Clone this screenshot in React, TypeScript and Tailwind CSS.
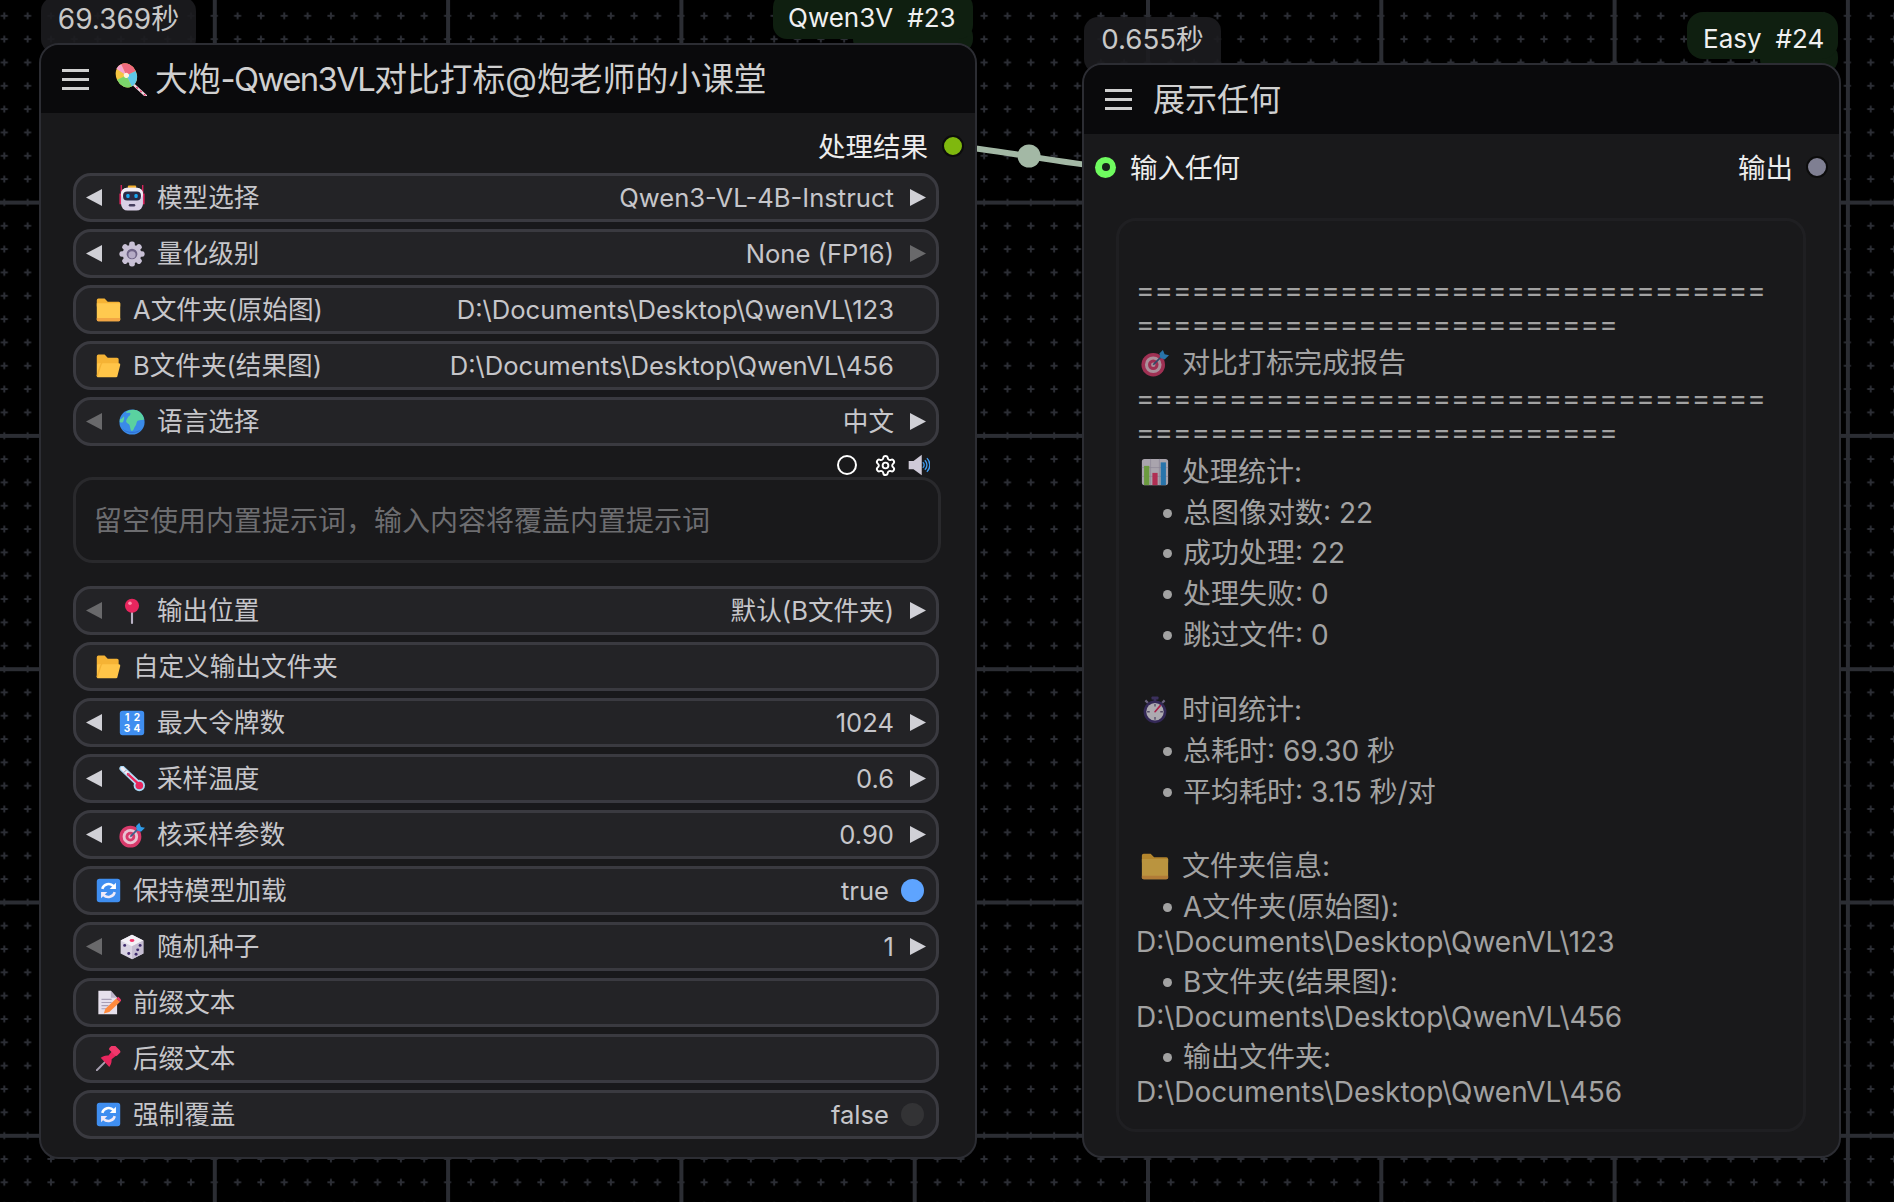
import React from "react";
import { Settings } from "lucide-react";

const FONT = "font-['Inter','Noto_Sans_CJK_SC','Noto_Sans',sans-serif]";

type IconP = { className?: string };
const Svg = ({ className = "w-[26px] h-[26px]", children }: IconP & { children: React.ReactNode }) => (
  <svg viewBox="0 0 32 32" className={`shrink-0 ${className}`}>{children}</svg>
);

const Robot = (p: IconP) => (
  <Svg {...p}>
    <rect x="0.5" y="10" width="2" height="14" rx="1" fill="#e0245e" />
    <rect x="29.5" y="10" width="2" height="14" rx="1" fill="#e0245e" />
    <rect x="2" y="0" width="1.6" height="10" fill="#e0245e" />
    <rect x="28.4" y="0" width="1.6" height="10" fill="#e0245e" />
    <rect x="11" y="0.5" width="10" height="4" rx="1" fill="#f5b02e" />
    <rect x="2.5" y="3.5" width="27" height="28" rx="8" fill="#d9cfe6" />
    <rect x="2.5" y="3.5" width="27" height="14" rx="7" fill="#f1edf5" />
    <rect x="5" y="8" width="22" height="11" rx="5" fill="#2b2a45" />
    <rect x="9" y="11" width="4" height="5" rx="1.5" fill="#19a6f0" />
    <rect x="19" y="11" width="4" height="5" rx="1.5" fill="#19a6f0" />
    <rect x="12" y="23.5" width="8" height="3" rx="1.5" fill="#453d5e" />
  </Svg>
);
const Gear = (p: IconP) => (
  <Svg {...p}>
    <g fill="#c9c1d6">
      {[0, 45, 90, 135, 180, 225, 270, 315].map((a) => (
        <rect key={a} x="12.5" y="0.5" width="7" height="9" rx="3" transform={`rotate(${a} 16 16)`} />
      ))}
      <circle cx="16" cy="16" r="11.5" />
    </g>
    <circle cx="16" cy="16" r="6.6" fill="#6f6487" />
    <circle cx="16" cy="17" r="4.4" fill="#b5abc6" />
  </Svg>
);
const Folder = (p: IconP) => (
  <Svg {...p}>
    <path d="M1 4a2 2 0 0 1 2-2h8l4 4h14a2 2 0 0 1 2 2v4H1z" fill="#f5b335" />
    <path d="M1 8h30v21a2 2 0 0 1-2 2H3a2 2 0 0 1-2-2z" fill="#ffc94f" />
    <path d="M1 27h30v2a2 2 0 0 1-2 2H3a2 2 0 0 1-2-2z" fill="#f2a544" />
  </Svg>
);
const OpenFolder = (p: IconP) => (
  <Svg {...p}>
    <path d="M1 4a2 2 0 0 1 2-2h8l4 4h12a2 2 0 0 1 2 2v6H1z" fill="#f5b335" />
    <path d="M1 30V14a2 2 0 0 1 2-1h26a2 2 0 0 1 2 2.5L27.5 29a2 2 0 0 1-2 2H2z" fill="#ffc548" />
    <path d="M1.500 29.500C3 26 6 12.500 8 12.500" stroke="#f5b335" strokeWidth="2" fill="none" />
  </Svg>
);
const Globe = (p: IconP) => (
  <Svg {...p}>
    <circle cx="16" cy="16" r="15.500" fill="#3a8be8" />
    <path d="M9 3.500C14 0 22 0 26 4c3 3 4 5 5 9-3 1-5 .500-7 1-3 .500-2 5-4 7-1.500 2-2 6-4 6-2 0-2-4-3-7-.500-2-3-2-4-4-1-2 1-4 2-6s3-2 3-4-2-1-5-1z" fill="#5ad2a0" />
    <path d="M1 13c2-1 4-2 5-4 1 2 0 5-1 7-1 1-3 1-4 0z" fill="#5ad2a0" />
    <path d="M4 24C8 30 22 33 28 24 24 29 10 30 4 24z" fill="#2f6fd6" />
  </Svg>
);
const RoundPin = (p: IconP) => (
  <Svg {...p}>
    <rect x="14.700" y="14" width="2.600" height="18" rx="1.300" fill="#b9b2c4" />
    <circle cx="16" cy="9.500" r="8.700" fill="#e8265e" />
    <circle cx="13.500" cy="6.500" r="2.200" fill="#ff90ad" />
  </Svg>
);
const Numbers = (p: IconP) => (
  <Svg {...p}>
    <rect x="1" y="1" width="30" height="30" rx="3.500" fill="#3f8ef0" />
    <g fill="#ffffff" fontFamily="Inter, sans-serif" fontWeight="700" fontSize="12.500" textAnchor="middle">
      <text x="10" y="14">1</text>
      <text x="22" y="14">2</text>
      <text x="10" y="27">3</text>
      <text x="22" y="27">4</text>
    </g>
  </Svg>
);
const Thermo = (p: IconP) => (
  <Svg {...p}>
    <path d="M4 3 L24 22" stroke="#a8d8f5" strokeWidth="7" strokeLinecap="round" />
    <circle cx="25" cy="24" r="7" fill="#a8d8f5" />
    <path d="M4 3 L24 22" stroke="#f1ecf5" strokeWidth="4" strokeLinecap="round" />
    <path d="M11 10 L24 22" stroke="#e8265e" strokeWidth="3" strokeLinecap="round" />
    <circle cx="25" cy="24" r="4.700" fill="#e8265e" />
    <g stroke="#8b7fa0" strokeWidth="1"><path d="M6 8l3-3M10 12l3-3" /></g>
  </Svg>
);
const Dart = (p: IconP) => (
  <Svg {...p}>
    <circle cx="14" cy="18" r="13.500" fill="#d83a6b" />
    <circle cx="14" cy="18" r="9.500" fill="#e9c3d2" />
    <circle cx="14" cy="18" r="6" fill="#d83a6b" />
    <circle cx="14" cy="18" r="2.500" fill="#e9c3d2" />
    <path d="M14 18 L25 7" stroke="#3b5f8a" strokeWidth="2" />
    <path d="M21 5l4-4 2 5 5 1-5 5-5-2z" fill="#2f9be8" />
  </Svg>
);
const Refresh = (p: IconP) => (
  <Svg {...p}>
    <rect x="1" y="1" width="30" height="30" rx="3.500" fill="#3f8ef0" />
    <path d="M8 14a8.500 8.500 0 0 1 14.500-3.500" stroke="#fff" strokeWidth="3.200" fill="none" />
    <path d="M25.500 6v8h-8z" fill="#fff" />
    <path d="M24 18a8.500 8.500 0 0 1-14.500 3.500" stroke="#f0eaf8" strokeWidth="3.200" fill="none" />
    <path d="M6.500 26v-8h8z" fill="#f0eaf8" />
  </Svg>
);
const Dice = (p: IconP) => (
  <Svg {...p}>
    <path d="M16 1l14 7v16l-14 7-14-7V8z" fill="#d9d3e2" />
    <path d="M16 1l14 7-14 7-14-7z" fill="#f4f1f7" />
    <path d="M30 8v16l-14 7V15z" fill="#c6bed2" />
    <ellipse cx="16" cy="8" rx="3" ry="1.800" fill="#f0386b" />
    <g fill="#3f2c6e">
      <circle cx="7" cy="14" r="1.800" /><circle cx="12" cy="24" r="1.800" />
      <circle cx="21" cy="25" r="1.800" /><circle cx="23" cy="19.500" r="1.800" /><circle cx="26" cy="14" r="1.800" />
    </g>
  </Svg>
);
const Memo = (p: IconP) => (
  <Svg {...p}>
    <path d="M3 1h16l8 9v21H3z" fill="#e6e0ec" />
    <path d="M19 1l8 9h-8z" fill="#bdb3c9" />
    <g stroke="#a99fb6" strokeWidth="1.300"><path d="M7 12h13M7 16h13M7 20h9M7 24h6" /></g>
    <path d="M10 30l2-6L26 11l5 4-14 13z" fill="#ff8a3d" />
    <path d="M26 11l2.500-2.500 4 4L31 15z" fill="#f0386b" />
  </Svg>
);
const Pushpin = (p: IconP) => (
  <Svg {...p}>
    <path d="M1 31l11-11" stroke="#a79fb0" strokeWidth="2.500" strokeLinecap="round" />
    <path d="M6 15c4-3 8-3 10-3l5-6 5 6-6 5c0 3 0 6-3 10z" fill="#e8265e" />
    <rect x="17" y="1" width="14" height="9" rx="2.500" transform="rotate(45 24 5.500)" fill="#f0386b" />
  </Svg>
);
const Lollipop = (p: IconP) => (
  <Svg {...p}>
    <path d="M18 20 L31 32" stroke="#f0d5df" strokeWidth="2.400" strokeLinecap="round" />
    <path d="M18 20 L31 32" stroke="#e8265e" strokeWidth="1.100" strokeDasharray="2 3" />
    <g transform="rotate(-25 12 12)">
      <ellipse cx="12" cy="12" rx="10" ry="12" fill="#f5c542" />
      <path d="M12 12V0a10 12 0 0 1 10 12z" fill="#f06a7f" />
      <path d="M12 12h10a10 12 0 0 1-10 12z" fill="#5ec8e8" />
      <path d="M12 12v12A10 12 0 0 1 2 12z" fill="#7bd66b" />
      <path d="M12 12L6 2a10 12 0 0 1 6-2z" fill="#f7a6d0" />
      <circle cx="12" cy="12" r="2.500" fill="#fff4dd" />
    </g>
  </Svg>
);
const Chart = (p: IconP) => (
  <Svg {...p}>
    <rect x="1" y="1" width="30" height="30" rx="3" fill="#e6e0ec" />
    <g stroke="#bdb3c9" strokeWidth="0.800"><path d="M11 1v30M21 1v30M1 11h30M1 21h30" /></g>
    <rect x="3.500" y="9" width="6" height="22" fill="#8fd14f" />
    <rect x="13" y="17" width="6" height="14" fill="#f0386b" />
    <rect x="22.500" y="5" width="6" height="26" fill="#2f9be8" />
  </Svg>
);
const Stopwatch = (p: IconP) => (
  <Svg {...p}>
    <rect x="12" y="0.500" width="8" height="3.500" rx="1" fill="#4a3a7a" />
    <rect x="14.500" y="3" width="3" height="4" fill="#4a3a7a" />
    <path d="M5 5l3 3M27 5l-3 3" stroke="#8f85a8" strokeWidth="2.500" />
    <circle cx="16" cy="18" r="13" fill="#3f2f70" />
    <circle cx="16" cy="18" r="10" fill="#ece8f0" />
    <g stroke="#6b5f85" strokeWidth="1.500"><path d="M16 9v3M16 24v3M7 18h3M22 18h3" /></g>
    <path d="M16 18L22 11" stroke="#e8265e" strokeWidth="1.800" strokeLinecap="round" />
  </Svg>
);
const Speaker = (p: IconP) => (
  <Svg {...p}>
    <path d="M1 10h7l12-9v30L8 22H1z" fill="#cfcad8" />
    <path d="M21.500 12a5 5 0 0 1 0 8" stroke="#3f9bf0" strokeWidth="2" fill="none" />
    <path d="M24.500 9a9.500 9.500 0 0 1 0 14" stroke="#3f9bf0" strokeWidth="2" fill="none" />
    <path d="M27.500 6a14 14 0 0 1 0 20" stroke="#3f9bf0" strokeWidth="2" fill="none" />
  </Svg>
);

const Tri = ({ dir, dim }: { dir: "l" | "r"; dim?: boolean }) => (
  <svg viewBox="0 0 16 17" className="w-[16px] h-[17px] shrink-0">
    <path d={dir === "l" ? "M16 0V17L0 8.500z" : "M0 0V17L16 8.500z"} fill={dim ? "#69696b" : "#d0d0d6"} />
  </svg>
);

const Row = ({ children }: { children: React.ReactNode }) => (
  <div className="flex items-center h-[49px] w-[866px] shrink-0 rounded-[18px] border-[3px] border-[#3a3a40] bg-[#232326] text-[25.6px] leading-none text-[#c6c6ca]">
    {children}
  </div>
);

const Combo = ({ icon, label, value, dimL, dimR }: { icon: React.ReactNode; label: string; value: string; dimL?: boolean; dimR?: boolean }) => (
  <Row>
    <div className="flex items-center w-full pl-[10px] pr-[10px]">
      <Tri dir="l" dim={dimL} />
      <div className="ml-[17px] mr-[12px] flex">{icon}</div>
      <span>{label}</span>
      <span className="ml-auto mr-[16px]">{value}</span>
      <Tri dir="r" dim={dimR} />
    </div>
  </Row>
);

const Text = ({ icon, label, value }: { icon: React.ReactNode; label: string; value?: string }) => (
  <Row>
    <div className="flex items-center w-full pl-[20px] pr-[42px]">
      <div className="mr-[12px] flex">{icon}</div>
      <span>{label}</span>
      {value && <span className="ml-auto">{value}</span>}
    </div>
  </Row>
);

const Toggle = ({ icon, label, value, on }: { icon: React.ReactNode; label: string; value: string; on: boolean }) => (
  <Row>
    <div className="flex items-center w-full pl-[20px] pr-[12px]">
      <div className="mr-[12px] flex">{icon}</div>
      <span>{label}</span>
      <span className="ml-auto mr-[12px]">{value}</span>
      <div className={`w-[23px] h-[23px] rounded-full ${on ? "bg-[#5ea4ff]" : "bg-[#333335]"}`} />
    </div>
  </Row>
);

const Hamburger = () => (
  <div className="flex flex-col justify-between w-[27px] h-[21px] shrink-0">
    <div className="h-[3px] bg-[#cfcfcf]" />
    <div className="h-[3px] bg-[#cfcfcf]" />
    <div className="h-[3px] bg-[#cfcfcf]" />
  </div>
);

const Line = ({ children, mt = "", icon }: { children: React.ReactNode; mt?: string; icon?: React.ReactNode }) => (
  <div className={`flex items-center h-[34px] whitespace-pre ${mt}`}>
    {icon && <div className="ml-[5px] mr-[13px] flex">{icon}</div>}
    <span>{children}</span>
  </div>
);
const Bullet = ({ children, mt = "mt-[7px]" }: { children: React.ReactNode; mt?: string }) => (
  <div className={`flex items-center h-[34px] whitespace-pre pl-[27px] ${mt}`}>
    <div className="w-[9px] h-[9px] rounded-full bg-[#dcdcdc] mr-[11px]" />
    <span>{children}</span>
  </div>
);

const EMOJI = "w-[28px] h-[28px]";
const STEP = 23.33;

const Canvas = () => (
  <svg className="absolute inset-0 w-full h-full" viewBox="0 0 1894 1202">
    <defs>
      <pattern id="plus" x={4.3 - STEP / 2} y={15.8 - STEP / 2} width={STEP} height={STEP} patternUnits="userSpaceOnUse">
        <path d={`M${STEP / 2 - 3.5} ${STEP / 2}h7M${STEP / 2} ${STEP / 2 - 3.5}v7`} stroke="#2c2e35" strokeWidth="2" />
      </pattern>
    </defs>
    <rect width="1894" height="1202" fill="url(#plus)" />
    {Array.from({ length: 9 }, (_, i) => (
      <rect key={i} x={-18.5 + i * 233.3 - 2} y="0" width="4" height="1202" fill="#2b2d33" />
    ))}
    {Array.from({ length: 6 }, (_, i) => (
      <rect key={i} x="0" y={202.6 + i * 233.3 - 2} width="1894" height="4" fill="#2b2d33" />
    ))}
    <path d="M953 146 C1000 150 1060 163 1106 167" stroke="#a3b8a5" strokeWidth="6" fill="none" />
    <circle cx="1029" cy="156" r="11.500" fill="#a3b8a5" />
  </svg>
);

export default function App() {
  return (
    <div className={`relative w-[1894px] h-[1202px] overflow-hidden bg-black ${FONT}`}>
      <Canvas />

      {/* Node 23 */}
      <div className="absolute left-[39px] top-[43px] w-[938px] h-[1116px]">
        <div className="absolute left-[2px] top-[-46px] w-[155px] h-[56px] rounded-[14px] bg-[#1c1c1f]/90 pt-[5px] text-center text-[28px] leading-[34px] text-[#c8c8c8]">
          69.369秒
        </div>
        <div className="absolute left-[814px] top-[-20px] w-[120px] h-[30px] rounded-[14px] bg-[#0f1f10]" />
        <div className="absolute left-[734px] top-[-50px] w-[200px] h-[46px] rounded-[14px] bg-[#0f1f10] flex pl-[15px] pt-[7px] gap-[14px] text-[26px] leading-[36px] text-[#f0f0f0]">
          <span className="whitespace-nowrap">Qwen3V</span>
          <span>#23</span>
        </div>

        <div className="relative h-full flex flex-col rounded-[20px] border-2 border-[#2c2d33] bg-[#19191b] overflow-hidden">
          <div className="flex items-center h-[68px] shrink-0 bg-[#0a0a0c] pl-[21px] text-[32.8px] leading-none text-[#d0d0d0]">
            <Hamburger />
            <div className="ml-[25px] mr-[8px] flex"><Lollipop className="w-[33px] h-[33px]" /></div>
            <span>大炮<span className="tracking-[-1.6px]">-Qwen3VL</span>对比打标@炮老师的小课堂</span>
          </div>
          <div className="flex items-center justify-end h-[60px] shrink-0 pt-[6px] pr-[11px] text-[27.5px] leading-none text-[#ececec]">
            <span className="mt-[3px]">处理结果</span>
            <div className="ml-[14px] w-[22px] h-[22px] rounded-full bg-[#7fb80e] border-[2px] border-[#0c0c0c]" />
          </div>
          <div className="flex flex-col gap-[7px] pl-[32px]">
            <Combo icon={<Robot />} label="模型选择" value="Qwen3-VL-4B-Instruct" />
            <Combo icon={<Gear />} label="量化级别" value="None (FP16)" dimR />
            <Text icon={<Folder className="w-[25px] h-[25px]" />} label="A文件夹(原始图)" value="D:\Documents\Desktop\QwenVL\123" />
            <Text icon={<OpenFolder className="w-[25px] h-[25px]" />} label="B文件夹(结果图)" value="D:\Documents\Desktop\QwenVL\456" />
            <Combo icon={<Globe />} label="语言选择" value="中文" dimL />
          </div>
          <div className="flex items-center justify-end h-[31px] shrink-0 w-[889px] pt-[7px]">
            <div className="w-[20px] h-[20px] rounded-full border-[2.5px] border-white" />
            <Settings className="ml-[17px] w-[23px] h-[23px] text-white" strokeWidth={2} />
            <Speaker className="ml-[11px] w-[22px] h-[22px]" />
          </div>
          <div className="ml-[32px] flex items-center w-[868px] h-[86px] shrink-0 rounded-[20px] border-[3px] border-[#29292c] pl-[18px] pt-[2px] text-[28px] leading-none text-[#6d6d70]">
            留空使用内置提示词，输入内容将覆盖内置提示词
          </div>
          <div className="flex flex-col gap-[7px] pl-[32px] mt-[23px]">
            <Combo icon={<RoundPin />} label="输出位置" value="默认(B文件夹)" dimL />
            <Text icon={<OpenFolder className="w-[25px] h-[25px]" />} label="自定义输出文件夹" />
            <Combo icon={<Numbers />} label="最大令牌数" value="1024" />
            <Combo icon={<Thermo />} label="采样温度" value="0.6" />
            <Combo icon={<Dart />} label="核采样参数" value="0.90" />
            <Toggle icon={<Refresh className="w-[25px] h-[25px]" />} label="保持模型加载" value="true" on />
            <Combo icon={<Dice />} label="随机种子" value="1" dimL />
            <Text icon={<Memo className="w-[25px] h-[25px]" />} label="前缀文本" />
            <Text icon={<Pushpin className="w-[25px] h-[25px]" />} label="后缀文本" />
            <Toggle icon={<Refresh className="w-[25px] h-[25px]" />} label="强制覆盖" value="false" on={false} />
          </div>
        </div>
      </div>

      {/* Node 24 */}
      <div className="absolute left-[1082px] top-[63px] w-[759px] h-[1095px]">
        <div className="absolute left-[2px] top-[-46px] w-[137px] h-[56px] rounded-[14px] bg-[#1c1c1f]/90 pt-[5px] text-center text-[27.7px] leading-[34px] text-[#c8c8c8]">
          0.655秒
        </div>
        <div className="absolute left-[678px] top-[-20px] w-[78px] h-[30px] rounded-[14px] bg-[#0f1f10]" />
        <div className="absolute left-[605px] top-[-51px] w-[151px] h-[47px] rounded-[16px] bg-[#0f1f10] flex pl-[16px] pt-[9px] gap-[14px] text-[26px] leading-[36px] text-[#f0f0f0]">
          <span className="whitespace-nowrap">Easy</span>
          <span>#24</span>
        </div>

        <div className="relative h-full flex flex-col rounded-[20px] border-2 border-[#2c2d33] bg-[#19191b] overflow-hidden">
          <div className="flex items-center h-[69px] shrink-0 bg-[#0a0a0c] pl-[21px] text-[32px] leading-none text-[#d0d0d0]">
            <Hamburger />
            <span className="ml-[21px]">展示任何</span>
          </div>
          <div className="flex items-center h-[66px] shrink-0 pl-[11px] pr-[11px] text-[27.5px] leading-none text-[#ececec]">
            <div className="flex items-center justify-center w-[21px] h-[21px] rounded-full bg-[#6ffb5f]">
              <div className="w-[8px] h-[8px] rounded-full bg-[#17251a]" />
            </div>
            <span className="ml-[14px] mt-[3px]">输入任何</span>
            <span className="ml-auto mt-[3px]">输出</span>
            <div className="ml-[13px] w-[22px] h-[22px] rounded-full bg-[#7f7f92] border-[2px] border-[#0c0c0c]" />
          </div>
          <div className="ml-[32px] mt-[18px] w-[690px] h-[914px] shrink-0 rounded-[20px] border-[3px] border-[#222225] pt-[52px] pl-[17px] text-[28px] leading-[34px] text-[#dcdcdc] opacity-70">
            <Line>{"=".repeat(34)}</Line>
            <Line>{"=".repeat(26)}</Line>
            <Line mt="mt-[5px]" icon={<Dart className={EMOJI} />}>对比打标完成报告</Line>
            <Line mt="mt-[1px]">{"=".repeat(34)}</Line>
            <Line>{"=".repeat(26)}</Line>
            <Line mt="mt-[6px]" icon={<Chart className={EMOJI} />}>处理统计:</Line>
            <Bullet>总图像对数: 22</Bullet>
            <Bullet mt="mt-[6px]">成功处理: 22</Bullet>
            <Bullet>处理失败: 0</Bullet>
            <Bullet>跳过文件: 0</Bullet>
            <Line mt="mt-[41px]" icon={<Stopwatch className={EMOJI} />}>时间统计:</Line>
            <Bullet>总耗时: 69.30 秒</Bullet>
            <Bullet>平均耗时: 3.15 秒/对</Bullet>
            <Line mt="mt-[40px]" icon={<Folder className={EMOJI} />}>文件夹信息:</Line>
            <Bullet>A文件夹(原始图):</Bullet>
            <Line mt="mt-[1px]">D:\Documents\Desktop\QwenVL\123</Line>
            <Bullet mt="mt-[6px]">B文件夹(结果图):</Bullet>
            <Line mt="mt-[1px]">D:\Documents\Desktop\QwenVL\456</Line>
            <Bullet mt="mt-[6px]">输出文件夹:</Bullet>
            <Line mt="mt-[1px]">D:\Documents\Desktop\QwenVL\456</Line>
          </div>
        </div>
      </div>
    </div>
  );
}
